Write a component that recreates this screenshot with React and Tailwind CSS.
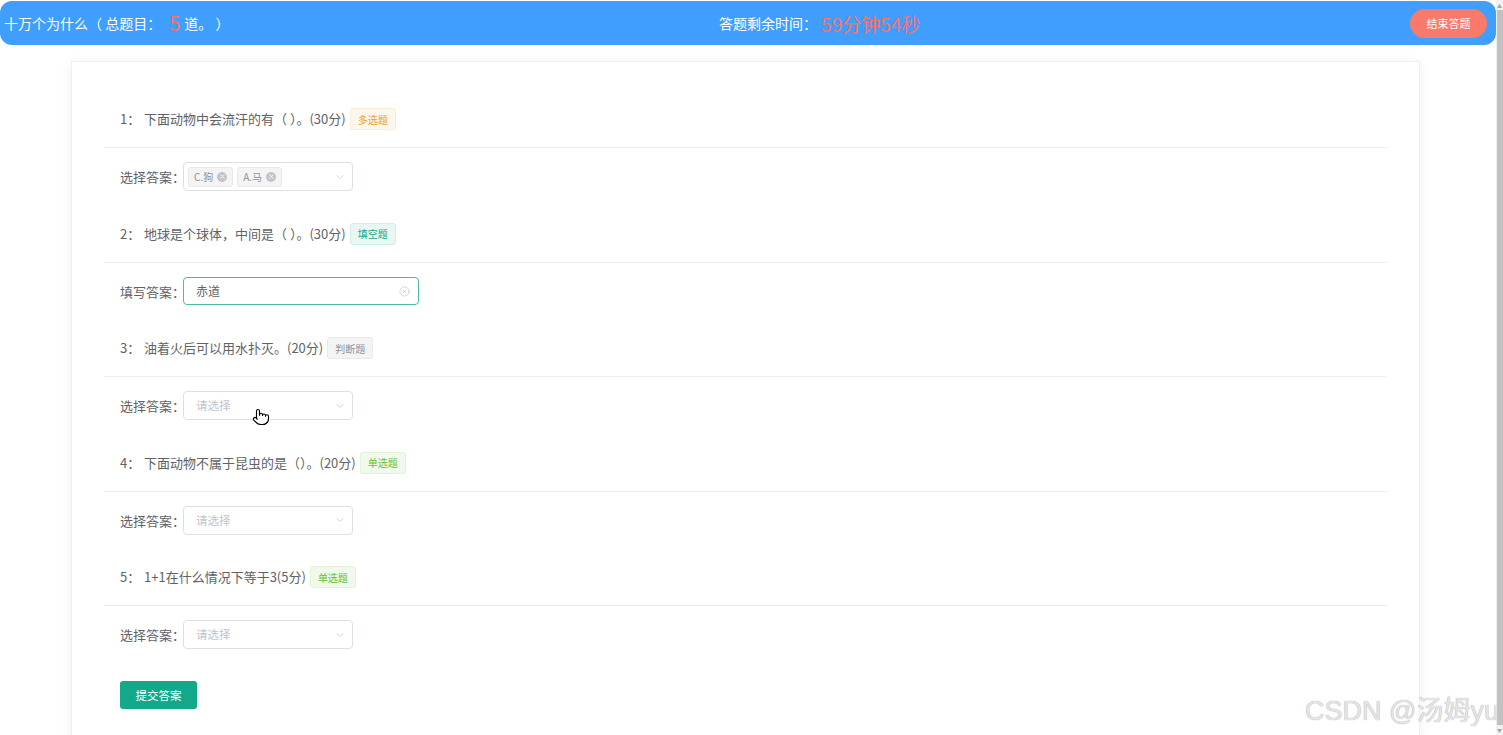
import React from 'react';
import { ChevronDown, CircleX, X, Pointer } from 'lucide-react';

const questions = [
  { no: 1, text: '下面动物中会流汗的有（ ）。(30分)', tag: '多选题', kind: 'multi' },
  { no: 2, text: '地球是个球体，中间是（ ）。(30分)', tag: '填空题', kind: 'fill' },
  { no: 3, text: '油着火后可以用水扑灭。(20分)', tag: '判断题', kind: 'judge' },
  { no: 4, text: '下面动物不属于昆虫的是（）。(20分)', tag: '单选题', kind: 'single' },
  { no: 5, text: '1+1在什么情况下等于3(5分)', tag: '单选题', kind: 'single' },
];

const tagStyle = {
  multi: 'bg-[#fdf6ec] border-[#faecd8] text-[#e6a23c]',
  fill: 'bg-[#e8f7f3] border-[#d1efe7] text-[#1aa889]',
  judge: 'bg-[#f4f4f5] border-[#e9e9eb] text-[#909399]',
  single: 'bg-[#f0f9eb] border-[#e1f3d8] text-[#67c23a]',
};

function ChosenTag({ label }) {
  return (
    <span className="flex items-center gap-[4px] h-[20px] px-[5px] rounded-[3px] bg-[#f4f4f5] border border-[#e9e9eb] text-[10px] text-[#909399]">
      {label}
      <span className="flex items-center justify-center w-[10px] h-[10px] rounded-full bg-[#c0c4cc]">
        <X size={7} strokeWidth={3} className="text-white" />
      </span>
    </span>
  );
}

function Answer({ q }) {
  if (q.kind === 'fill') {
    return (
      <div className="flex items-center">
        <span className="w-[63px] whitespace-nowrap text-[13px] text-[#606266]">填写答案：</span>
        <div className="flex items-center justify-between w-[236px] h-[28px] pl-[12px] pr-[8px] rounded-[4px] border border-[#4dbaa2] text-[12px] text-[#606266]">
          赤道
          <CircleX size={11} strokeWidth={1.5} className="text-[#c0c4cc]" />
        </div>
      </div>
    );
  }
  return (
    <div className="flex items-center">
      <span className="w-[63px] whitespace-nowrap text-[13px] text-[#606266]">选择答案：</span>
      <div className="flex items-center justify-between w-[170px] h-[29px] pl-[4px] pr-[6px] rounded-[4px] border border-[#dcdfe6]">
        {q.kind === 'multi' ? (
          <div className="flex items-center gap-[4px]">
            <ChosenTag label="C.狗" />
            <ChosenTag label="A.马" />
          </div>
        ) : (
          <span className="pl-[8px] text-[11.5px] text-[#c0c4cc]">请选择</span>
        )}
        <ChevronDown size={12} strokeWidth={1.5} className="text-[#c0c4cc]" />
      </div>
    </div>
  );
}

export default function App() {
  return (
    <div className="relative flex h-[735px] w-full overflow-hidden bg-white font-['Noto_Sans_CJK_SC',sans-serif]">
      <div className="flex-1 min-w-0">
        {/* header bar */}
        <div className="mt-px flex items-center justify-between h-[44px] pl-[4px] pr-[9px] rounded-[12px] bg-[#409eff] text-white">
          <div className="flex items-center text-[14px]">
            十万个为什么（ 总题目：
            <span className="ml-[8px] mr-[4px] text-[20px] leading-none text-[#f4735f]">5</span>
            道。 ）
          </div>
          <div className="flex items-center text-[14px]">
            答题剩余时间：
            <span className="ml-[4px] text-[19px] leading-none text-[#f4735f]">59分钟54秒</span>
          </div>
          <button className="h-[29px] w-[77px] rounded-full bg-[#f97a6a] text-[11px] text-white">结束答题</button>
        </div>

        {/* question card */}
        <div className="mt-[16px] ml-[71px] w-[1349px] h-[700px] px-[32px] pt-[29px] bg-white border border-[#f0f0f0] shadow-[0_2px_12px_0_rgba(0,0,0,0.06)]">
          {questions.map((q) => (
            <div key={q.no}>
              <div className="flex items-center h-[57px] pl-[16px] border-b border-[#eeeeee] text-[13px] text-[#606266]">
                <span className="w-[24px]">{q.no}：</span>
                <span>{q.text}</span>
                <span className={`ml-[4px] flex items-center h-[22px] px-[7px] rounded-[3px] border text-[10px] ${tagStyle[q.kind]}`}>
                  {q.tag}
                </span>
              </div>
              <div className="flex items-center h-[57.5px] pl-[16px]">
                <Answer q={q} />
              </div>
            </div>
          ))}
          <div className="pl-[16px] mt-[17px]">
            <button className="h-[28px] w-[77px] rounded-[3px] bg-[#13a88a] text-[11.5px] text-white">提交答案</button>
          </div>
        </div>
      </div>

      {/* scrollbar */}
      <div className="flex flex-col items-center w-[7px] bg-[#f1f1f1]">
        <span className="mt-[3px] text-[5px] leading-none text-[#a3a3a3]">▲</span>
        <div className="mt-[2px] mb-[2px] w-[6px] flex-1 bg-[#c1c1c1]" />
        <span className="mb-[3px] text-[5px] leading-none text-[#a3a3a3]">▼</span>
      </div>

      {/* mouse cursor */}
      <Pointer size={18} strokeWidth={1.5} className="absolute left-[252px] top-[408px] text-black fill-white" />

      {/* watermark */}
      <div className="absolute right-[4px] bottom-[10px] text-[27px] leading-none text-[#e4e4e4] font-['Liberation_Sans','Noto_Sans_CJK_SC',sans-serif] [text-shadow:0_0_1px_#9a9a9a]">
        CSDN @汤姆yu
      </div>
    </div>
  );
}
